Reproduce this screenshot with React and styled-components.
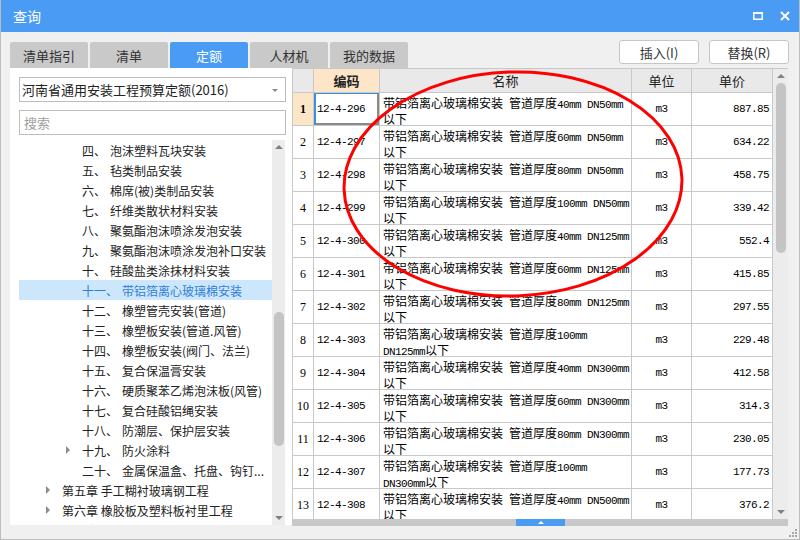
import React from "react";
import styled, { createGlobalStyle } from "styled-components";

const BLUE = "#4a9bf4";
const GRID = "#c8c8c8";
const PEACH = "#fde5c8";
const CJK = `"Noto Sans CJK SC", "Noto Sans", sans-serif`;
const MONO = `"Liberation Mono", "Noto Sans CJK SC", monospace`;

const tree = [
  { lv: 2, num: "四、", name: "泡沫塑料瓦块安装" },
  { lv: 2, num: "五、", name: "毡类制品安装" },
  { lv: 2, num: "六、", name: "棉席(被)类制品安装" },
  { lv: 2, num: "七、", name: "纤维类散状材料安装" },
  { lv: 2, num: "八、", name: "聚氨酯泡沫喷涂发泡安装" },
  { lv: 2, num: "九、", name: "聚氨酯泡沫喷涂发泡补口安装" },
  { lv: 2, num: "十、", name: "硅酸盐类涂抹材料安装" },
  { lv: 2, num: "十一、", name: "带铝箔离心玻璃棉安装", sel: true },
  { lv: 2, num: "十二、", name: "橡塑管壳安装(管道)" },
  { lv: 2, num: "十三、", name: "橡塑板安装(管道.风管)" },
  { lv: 2, num: "十四、", name: "橡塑板安装(阀门、法兰)" },
  { lv: 2, num: "十五、", name: "复合保温膏安装" },
  { lv: 2, num: "十六、", name: "硬质聚苯乙烯泡沫板(风管)" },
  { lv: 2, num: "十七、", name: "复合硅酸铝绳安装" },
  { lv: 2, num: "十八、", name: "防潮层、保护层安装" },
  { lv: 2, num: "十九、", name: "防火涂料", exp: true },
  { lv: 2, num: "二十、", name: "金属保温盒、托盘、钩钉..." },
  { lv: 1, name: "第五章 手工糊衬玻璃钢工程", exp: true },
  { lv: 1, name: "第六章 橡胶板及塑料板衬里工程", exp: true },
  { lv: 1, name: "第七章 衬铅及搪铅工程", exp: true },
];

const PRE = "带铝箔离心玻璃棉安装 管道厚度";
const rows = [
  ["12-4-296", [PRE + "40mm DN50mm", "以下"], "887.85"],
  ["12-4-297", [PRE + "60mm DN50mm", "以下"], "634.22"],
  ["12-4-298", [PRE + "80mm DN50mm", "以下"], "458.75"],
  ["12-4-299", [PRE + "100mm DN50mm", "以下"], "339.42"],
  ["12-4-300", [PRE + "40mm DN125mm", "以下"], "552.4"],
  ["12-4-301", [PRE + "60mm DN125mm", "以下"], "415.85"],
  ["12-4-302", [PRE + "80mm DN125mm", "以下"], "297.55"],
  ["12-4-303", [PRE + "100mm", "DN125mm以下"], "229.48"],
  ["12-4-304", [PRE + "40mm DN300mm", "以下"], "412.58"],
  ["12-4-305", [PRE + "60mm DN300mm", "以下"], "314.3"],
  ["12-4-306", [PRE + "80mm DN300mm", "以下"], "230.05"],
  ["12-4-307", [PRE + "100mm", "DN300mm以下"], "177.73"],
  ["12-4-308", [PRE + "40mm DN500mm", "以下"], "376.2"],
];

const GlobalStyle = createGlobalStyle`
  html, body { margin: 0; padding: 0; background: #f0f0f0; }
  body { font-family: ${CJK}; }
  * { box-sizing: border-box; }
`;

const Window = styled.div`
  position: relative;
  width: 800px;
  height: 540px;
  background: #f0f0f0;
  border: 1px solid #bcbcbc;
  border-top: none;
  display: flex;
  flex-direction: column;
  overflow: hidden;
`;

const TitleBar = styled.div`
  height: 32px;
  flex: none;
  background: ${BLUE};
  color: #fff;
  font-size: 14px;
  display: flex;
  align-items: center;
  padding: 0 9px 0 12px;
`;

const WinButtons = styled.div`
  margin-left: auto;
  display: flex;
  align-items: center;
  gap: 17px;
`;

const TopRow = styled.div`
  height: 36px;
  flex: none;
  display: flex;
  padding: 0 10px 0 9px;
`;

const Tabs = styled.div`
  display: flex;
  gap: 2px;
  align-self: flex-end;
`;

const Tab = styled.div`
  width: 78px;
  height: 26px;
  display: flex;
  align-items: center;
  justify-content: center;
  border-radius: 2px 2px 0 0;
  font-size: 13px;
  background: ${(p) => (p.$active ? BLUE : "#c9c9c9")};
  color: ${(p) => (p.$active ? "#fff" : "#333")};
`;

const Actions = styled.div`
  margin-left: auto;
  margin-top: 8px;
  align-self: flex-start;
  display: flex;
  gap: 10px;
`;

const ActionButton = styled.button`
  width: 80px;
  height: 24px;
  padding: 0;
  background: #fff;
  border: 1px solid #c6c6c6;
  border-radius: 3px;
  font: 13px ${CJK};
  color: #333;
`;

const Body = styled.div`
  height: 458px;
  flex: none;
  display: flex;
  margin: 0 11px 0 9px;
`;

const LeftPanel = styled.div`
  width: 282px;
  height: 457px;
  flex: none;
  background: #fff;
  display: flex;
  flex-direction: column;
  padding: 9px 6px 0 9px;
`;

const Select = styled.div`
  position: relative;
  height: 25px;
  flex: none;
  border: 1px solid #bdbdbd;
  padding: 0 2px;
  display: flex;
  align-items: center;
  font-size: 13px;
  color: #222;

  &::after {
    content: "";
    position: absolute;
    right: 7px;
    top: 11px;
    border-left: 3px solid transparent;
    border-right: 3px solid transparent;
    border-top: 3px solid #8a8a8a;
  }
`;

const Search = styled.div`
  height: 25px;
  flex: none;
  margin-top: 8px;
  border: 1px solid #bdbdbd;
  padding: 0 4px;
  display: flex;
  align-items: center;
  font-size: 13px;
  color: #a0a0a0;
`;

const Tree = styled.div`
  flex: 1;
  margin-top: 5px;
  margin-right: 1px;
  display: flex;
  min-height: 0;
`;

const TreeList = styled.div`
  flex: 1;
  overflow: hidden;
`;

const TreeRow = styled.div`
  height: 20px;
  display: flex;
  align-items: center;
  white-space: nowrap;
  font-size: 12px;
  padding-left: ${(p) => (p.$lv === 1 ? 27 : 47)}px;
  background: ${(p) => (p.$sel ? "#cce6fc" : "transparent")};
  color: ${(p) => (p.$sel ? "#2f7fd8" : "#222")};
`;

const Expander = styled.span`
  width: 16px;
  flex: none;
  display: flex;
  align-items: center;

  &::before {
    content: "";
    display: ${(p) => (p.$show ? "block" : "none")};
    border-left: 4px solid #8c8c8c;
    border-top: 4px solid transparent;
    border-bottom: 4px solid transparent;
  }
`;

const Num = styled.span`
  margin-right: 4px;
`;

const ScrollTrack = styled.div`
  width: ${(p) => p.$w}px;
  flex: none;
  background: #ececec;
  display: flex;
  flex-direction: column;
  align-items: center;
  position: relative;
`;

const Arrow = styled.div`
  flex: none;
  margin-top: ${(p) => (p.$down ? "auto" : "5px")};
  margin-bottom: ${(p) => (p.$down ? "5px" : "0")};
  border-left: 4px solid transparent;
  border-right: 4px solid transparent;
  ${(p) => (p.$down ? "border-top" : "border-bottom")}: 4px solid #808080;
`;

const Thumb = styled.div`
  position: absolute;
  left: 50%;
  transform: translateX(-50%);
  width: ${(p) => p.$w}px;
  border-radius: 5px;
  background: #c4c4c4;
`;

const TablePanel = styled.div`
  flex: 1;
  display: flex;
  flex-direction: column;
  border-left: 1px solid ${GRID};
  background: #fff;
`;

const TableMain = styled.div`
  flex: 1;
  display: flex;
  min-height: 0;
  border-top: 1px solid ${GRID};
`;

const Grid = styled.div`
  width: 480px;
  flex: none;
  display: grid;
  grid-template-columns: 21px 66px 252px 60px 81px;
  grid-auto-rows: 33px;
  grid-template-rows: 24px;
  overflow: hidden;
  align-content: start;
`;

const Cell = styled.div`
  border-right: 1px solid ${GRID};
  border-bottom: 1px solid ${GRID};
  display: flex;
  align-items: center;
  overflow: hidden;
  white-space: nowrap;
  color: #000;
`;

const HeadCell = styled(Cell)`
  justify-content: center;
  font-size: 13px;
  color: #222;
  background: ${(p) => (p.$hl ? PEACH : "#e9e9e9")};
  font-weight: ${(p) => (p.$hl ? 700 : 400)};
`;

const NumCell = styled(Cell)`
  justify-content: center;
  font-family: "Liberation Serif", serif;
  font-size: 12px;
  background: ${(p) => (p.$active ? PEACH : "#fff")};
  font-weight: ${(p) => (p.$active ? 700 : 400)};
`;

const MonoCell = styled(Cell)`
  font-family: ${MONO};
  font-size: 11px;
  letter-spacing: -0.6px;
  padding: 0 3px;
  justify-content: ${(p) => p.$align || "flex-start"};
  ${(p) =>
    p.$active &&
    `box-shadow: inset 2px 1px 0 #3d8fe8, inset -2px -2px 0 #8a8a8a;`}
`;

const NameCell = styled(Cell)`
  flex-direction: column;
  align-items: flex-start;
  justify-content: flex-start;
  padding: 3px 3px 0;
  font-size: 12px;
  line-height: 13px;
`;

const Latin = styled.span`
  font-family: "Liberation Mono", monospace;
  font-size: 11px;
  letter-spacing: -0.6px;
`;

const HBar = styled.div`
  height: 7px;
  flex: none;
  background: #c8c8c8;
  display: flex;
  justify-content: center;
`;

const Handle = styled.div`
  width: 49px;
  background: ${BLUE};
  display: flex;
  justify-content: center;
  align-items: center;

  &::before {
    content: "";
    border-left: 3px solid transparent;
    border-right: 3px solid transparent;
    border-bottom: 3px solid #fff;
  }
`;

const BottomBar = styled.div`
  height: 13px;
  flex: none;
  display: flex;
  justify-content: flex-end;
  align-items: flex-end;
  padding: 0 2px 2px 0;
`;

const Overlay = styled.svg`
  position: absolute;
  left: 0;
  top: 0;
  pointer-events: none;
`;

function Mixed({ text }) {
  const parts = text.split(/([\x00-\xff]+)/).filter(Boolean);
  return parts.map((p, i) =>
    /^[\x00-\xff]+$/.test(p) ? <Latin key={i}>{p}</Latin> : <span key={i}>{p}</span>
  );
}

export default function App() {
  return (
    <>
      <GlobalStyle />
      <Window>
        <TitleBar>
          查询
          <WinButtons>
            <svg width="10" height="10" viewBox="0 0 10 10">
              <rect x="0.75" y="1.75" width="8.5" height="6.5" fill="none" stroke="#fff" strokeWidth="1.5" />
              <rect x="0" y="1" width="10" height="2" fill="#fff" />
            </svg>
            <svg width="10" height="10" viewBox="0 0 10 10">
              <path d="M1 1L9 9M9 1L1 9" stroke="#fff" strokeWidth="2" />
            </svg>
          </WinButtons>
        </TitleBar>

        <TopRow>
          <Tabs>
            <Tab>清单指引</Tab>
            <Tab>清单</Tab>
            <Tab $active>定额</Tab>
            <Tab>人材机</Tab>
            <Tab>我的数据</Tab>
          </Tabs>
          <Actions>
            <ActionButton>插入(I)</ActionButton>
            <ActionButton>替换(R)</ActionButton>
          </Actions>
        </TopRow>

        <Body>
          <LeftPanel>
            <Select>河南省通用安装工程预算定额(2016)</Select>
            <Search>搜索</Search>
            <Tree>
              <TreeList>
                {tree.map((t, i) => (
                  <TreeRow key={i} $lv={t.lv} $sel={t.sel}>
                    <Expander $show={t.exp} />
                    {t.num && <Num>{t.num}</Num>}
                    <span>{t.name}</span>
                  </TreeRow>
                ))}
              </TreeList>
              <ScrollTrack $w={13}>
                <Arrow />
                <Thumb $w={10} style={{ top: 172, height: 134 }} />
                <Arrow $down />
              </ScrollTrack>
            </Tree>
          </LeftPanel>

          <TablePanel>
            <TableMain>
              <Grid>
                <HeadCell />
                <HeadCell $hl>编码</HeadCell>
                <HeadCell>名称</HeadCell>
                <HeadCell>单位</HeadCell>
                <HeadCell>单价</HeadCell>
                {rows.map(([code, lines, price], i) => (
                  <React.Fragment key={code}>
                    <NumCell $active={i === 0}>{i + 1}</NumCell>
                    <MonoCell $active={i === 0}>{code}</MonoCell>
                    <NameCell>
                      {lines.map((l, j) => (
                        <div key={j}>
                          <Mixed text={l} />
                        </div>
                      ))}
                    </NameCell>
                    <MonoCell $align="center">m3</MonoCell>
                    <MonoCell $align="flex-end">{price}</MonoCell>
                  </React.Fragment>
                ))}
              </Grid>
              <ScrollTrack $w={15}>
                <Arrow />
                <Thumb $w={10} style={{ top: 14, height: 170 }} />
                <Arrow $down />
              </ScrollTrack>
            </TableMain>
            <HBar>
              <Handle />
            </HBar>
          </TablePanel>
        </Body>

        <BottomBar>
          <svg width="8" height="8" viewBox="0 0 8 8">
            {[[6, 0], [3, 3], [6, 3], [0, 6], [3, 6], [6, 6]].map(([x, y]) => (
              <rect key={`${x}-${y}`} x={x} y={y} width="2" height="2" fill="#a8a8a8" />
            ))}
          </svg>
        </BottomBar>

        <Overlay width="800" height="540" viewBox="0 0 800 540">
          <ellipse
            cx="512"
            cy="184"
            rx="169"
            ry="112"
            fill="none"
            stroke="#f00"
            strokeWidth="3"
            transform="rotate(-2 512 184)"
          />
        </Overlay>
      </Window>
    </>
  );
}
